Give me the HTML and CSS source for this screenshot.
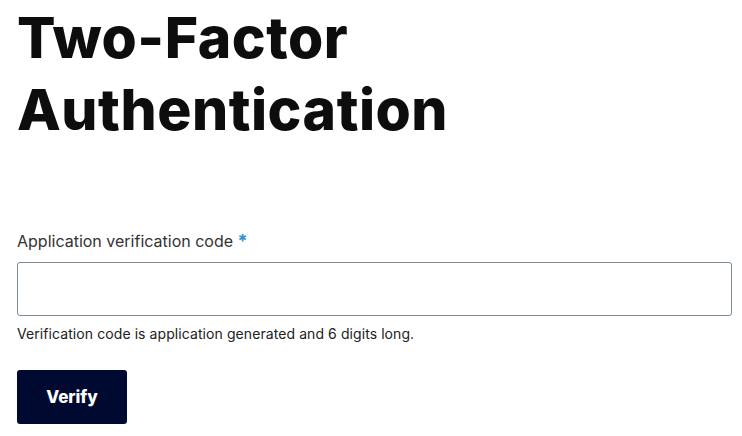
FILE: index.html
```html
<!DOCTYPE html>
<html lang="en">
<head>
<meta charset="utf-8">
<link rel="stylesheet" href="styles.css">
</head>
<body>
<main class="page">
  <h1 class="title">Two-Factor Authentication</h1>
  <form class="form">
    <label class="label" for="code">Application verification code <span class="req">*</span></label>
    <input class="input" id="code" type="text">
    <p class="help">Verification code is application generated and 6 digits long.</p>
    <button class="btn" type="button">Verify</button>
  </form>
</main>
</body>
</html>
```
FILE: styles.css
```css
html, body { margin: 0; padding: 0; background: #fff; }
body { font-family: Inter, "Liberation Sans", sans-serif; color: #1a1a1a; }
.page { padding: 0 10px 0 17px; }
.title {
  margin: 0;
  padding-top: 2px;
  width: 480px;
  font-size: 57px;
  line-height: 72px;
  font-weight: 800;
  letter-spacing: 0.5px;
  color: #0d0d0d;
}
.form { display: flex; flex-direction: column; align-items: flex-start; margin-top: 85px; }
.label { font-size: 16px; color: #333; line-height: 20px; }
.req { color: #2d8fce; font-weight: 700; font-size: 18px; }
.input {
  box-sizing: border-box;
  margin-top: 11px;
  width: 715px;
  height: 54px;
  border: 1px solid #7b8a97;
  border-radius: 3px;
  font-size: 16px;
}
.help { margin: 9px 0 0; font-size: 14px; color: #222; line-height: 18px; letter-spacing: 0.08px; }
.btn {
  margin-top: 27px;
  width: 110px;
  height: 54px;
  border: 0;
  border-radius: 3px;
  background: #000a30;
  color: #fff;
  font-family: Inter, "Liberation Sans", sans-serif;
  font-weight: 800;
  font-size: 17px;
}
```
